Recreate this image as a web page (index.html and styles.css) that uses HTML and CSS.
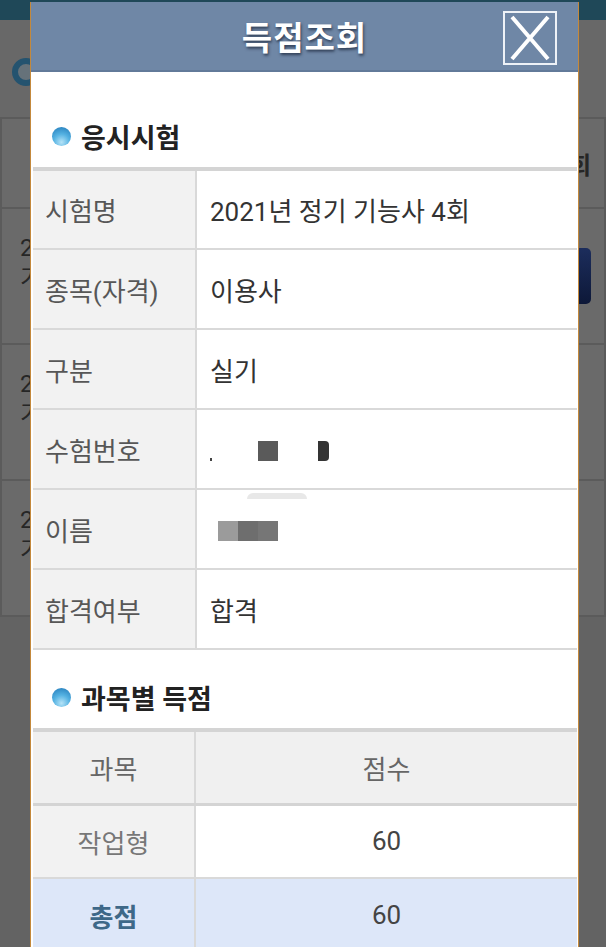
FILE: index.html
```html
<!DOCTYPE html>
<html lang="ko">
<head>
    <meta charset="UTF-8">
    <meta name="viewport" content="width=device-width, initial-scale=1.0">
    <title>득점조회</title>
    <link rel="stylesheet" href="styles.css">
</head>
<body>
    <div class="page">
        <div class="page-top"></div>
        <div class="page-head"><span class="page-icon"></span></div>
        <table class="page-table">
            <tr class="page-th">
                <td class="pc1"></td>
                <td class="pc2"></td>
                <td class="pc3">회</td>
            </tr>
            <tr class="page-row">
                <td class="pc1">2<br>기</td>
                <td class="pc2"></td>
                <td class="pc3"><span class="page-btn"></span></td>
            </tr>
            <tr class="page-row">
                <td class="pc1">2<br>기</td>
                <td class="pc2"></td>
                <td class="pc3"></td>
            </tr>
            <tr class="page-row">
                <td class="pc1">2<br>기</td>
                <td class="pc2"></td>
                <td class="pc3"></td>
            </tr>
        </table>
    </div>

    <div class="modal">
        <div class="modal-head">
            <h1 class="modal-title">득점조회</h1>
            <button class="close-btn" type="button" aria-label="닫기">
                <svg width="50" height="50" viewBox="0 0 50 50">
                    <path d="M7 4 L43 46 M43 4 L7 46" stroke="#ffffff" stroke-width="4" fill="none"/>
                </svg>
            </button>
        </div>

        <div class="modal-body">
            <h2 class="sec"><span class="dot"></span>응시시험</h2>
            <table class="info">
                <tr>
                    <th>시험명</th>
                    <td>2021년 정기 기능사 4회</td>
                </tr>
                <tr>
                    <th>종목(자격)</th>
                    <td>이용사</td>
                </tr>
                <tr>
                    <th>구분</th>
                    <td>실기</td>
                </tr>
                <tr>
                    <th>수험번호</th>
                    <td class="masked"><span class="px px-tick"></span><span class="px px-a"></span><span class="px px-b"></span></td>
                </tr>
                <tr>
                    <th>이름</th>
                    <td class="masked"><span class="ghost"></span><span class="px px-c"></span><span class="px px-d"></span><span class="px px-e"></span></td>
                </tr>
                <tr>
                    <th>합격여부</th>
                    <td>합격</td>
                </tr>
            </table>

            <h2 class="sec"><span class="dot"></span>과목별 득점</h2>
            <table class="score">
                <tr class="score-head">
                    <th>과목</th>
                    <th>점수</th>
                </tr>
                <tr>
                    <th>작업형</th>
                    <td>60</td>
                </tr>
                <tr class="score-total">
                    <th>총점</th>
                    <td>60</td>
                </tr>
            </table>
        </div>
    </div>
</body>
</html>
```

FILE: styles.css
```css
body {
    margin: 0;
    width: 606px;
    height: 947px;
    overflow: hidden;
    position: relative;
    background-color: #636363;
    font-family: "Roboto", "Noto Sans CJK KR", sans-serif;
}

/* page behind the popup, already dimmed */

.page-top {
    height: 20px;
    background-color: #1f4858;
}

.page-head {
    height: 97px;
    display: flex;
    align-items: center;
    padding: 7px 0 0 12px;
    box-sizing: border-box;
    background-color: #686868;
}

.page-icon {
    width: 28px;
    height: 28px;
    border-radius: 50%;
    border: 6px solid #24536f;
    box-sizing: border-box;
    background-color: #66727a;
}

.page-table {
    width: 100%;
    border-collapse: collapse;
}

.page-table td {
    border: 2px solid #5b5b5b;
    background-color: #6a6a6a;
    color: #262626;
    font-size: 24px;
    padding: 0;
}

.page-th {
    height: 90px;
}

.page-row {
    height: 136px;
}

.page-row .pc1 {
    vertical-align: top;
    padding: 24px 0 0 18px;
    line-height: 30px;
}

.pc1 {
    width: 150px;
}

.pc3 {
    width: 110px;
    text-align: right;
    padding-right: 13px !important;
    font-weight: bold;
}

.page-btn {
    display: inline-block;
    width: 80px;
    height: 56px;
    border-radius: 5px;
    background: linear-gradient(#1c2d5c, #0d1838);
    vertical-align: middle;
}

/* popup */

.modal {
    position: absolute;
    top: 2px;
    left: 30px;
    width: 547px;
    height: 990px;
    background-color: #fff;
    border-left: 1px solid #c4893c;
    border-right: 1px solid #c4893c;
}

.modal-head {
    height: 68px;
    background-color: #6f87a6;
    border-bottom: 2px solid #627a99;
    display: grid;
    grid-template-columns: 1fr auto 1fr;
    align-items: center;
}

.modal-title {
    grid-column: 2;
    margin: 0;
    color: #fff;
    font-size: 33px;
    font-weight: bold;
    letter-spacing: 1px;
    text-shadow: 1px 2px 3px rgba(20, 30, 50, 0.7);
}

.close-btn {
    grid-column: 3;
    justify-self: end;
    margin: 3px 21px 0 0;
    width: 54px;
    height: 54px;
    padding: 0;
    border: 2px solid #eef2f7;
    background: none;
    display: flex;
    align-items: center;
    justify-content: center;
    cursor: pointer;
}

.modal-body {
    padding-top: 17px;
}

.sec {
    display: flex;
    align-items: center;
    gap: 10px;
    height: 40px;
    margin: 27px 0 11px;
    padding-left: 21px;
    font-size: 27px;
    font-weight: bold;
    color: #222;
}

.dot {
    width: 19px;
    height: 19px;
    border-radius: 50%;
    background: radial-gradient(circle at 50% 80%, #b5e3f7 0%, #55b2e2 45%, #1f77b7 100%);
}

.info,
.score {
    width: 544px;
    margin-left: 2px;
    border-collapse: collapse;
    font-size: 26px;
}

.info th,
.info td,
.score th,
.score td {
    border: 2px solid #d9d9d9;
    border-left: none;
    border-right: none;
    padding: 0;
}

.info tr:first-child th,
.info tr:first-child td,
.score tr:first-child th {
    border-top: 4px solid #d4d4d4;
}

.info th,
.score th {
    border-right: 2px solid #d9d9d9;
    background-color: #f2f2f2;
    font-weight: normal;
}

.info tr {
    height: 80px;
}

.info th {
    width: 150px;
    text-align: left;
    padding-left: 12px;
    color: #575757;
}

.info td {
    padding-left: 13px;
    color: #333;
}

.masked {
    position: relative;
}

.px {
    display: inline-block;
    width: 20px;
    height: 20px;
    vertical-align: middle;
}

.px-tick {
    width: 2px;
    height: 3px;
    margin-top: 16px;
    background-color: #444;
}

.px-a {
    margin-left: 46px;
    background-color: #5a5a5a;
}

.px-b {
    width: 11px;
    margin-left: 40px;
    border-radius: 0 4px 4px 0;
    background-color: #343434;
}

.px-c {
    margin-left: 8px;
    background-color: #9b9b9b;
}

.px-d {
    background-color: #6e6e6e;
}

.px-e {
    background-color: #767676;
}

.ghost {
    position: absolute;
    top: 3px;
    left: 50px;
    width: 60px;
    height: 6px;
    border-radius: 30px 30px 0 0;
    background-color: #e8e8e8;
}

.score th,
.score td {
    text-align: center;
}

.score th {
    width: 161px;
    color: #777;
}

.score-head {
    height: 75px;
}

.score-head th {
    color: #666;
    background-color: #f0f0f0;
    border-bottom: 3px solid #d4d4d4;
}

.score-head th + th {
    width: auto;
    border-right: none;
}

.score tr {
    height: 74px;
}

.score td {
    color: #444;
    background-color: #fff;
}

.score-total th,
.score-total td {
    background-color: #dde7f9;
}

.score-total th {
    color: #3e6888;
    font-weight: bold;
}
```
